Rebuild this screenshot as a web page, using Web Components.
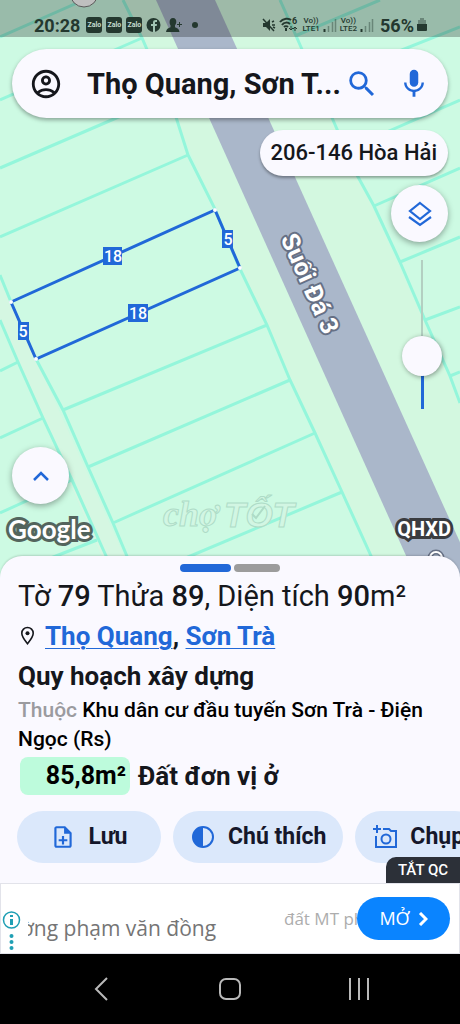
<!DOCTYPE html>
<html lang="vi">
<head>
<meta charset="utf-8">
<meta name="viewport" content="width=device-width, initial-scale=1">
<title>Bản đồ quy hoạch</title>
<style>
  html, body { margin: 0; }
  body { font-family: Roboto, "Noto Sans", sans-serif; color: #15171c; background: #000; }
</style>
</head>
<body>
<app-screen>
  <land-map slot="map"></land-map>
  <status-bar slot="top"></status-bar>
  <search-bar slot="top" query="Thọ Quang, Sơn T..."></search-bar>
  <map-tools slot="top"></map-tools>
  <map-footer slot="top"></map-footer>
  <parcel-sheet slot="sheet"></parcel-sheet>
  <ad-banner slot="ad"></ad-banner>
  <nav-bar slot="nav"></nav-bar>
</app-screen>

<script>
function define(name, html, setup) {
  const template = document.createElement('template');
  template.innerHTML = html;
  customElements.define(name, class extends HTMLElement {
    constructor() {
      super();
      this.attachShadow({ mode: 'open' }).append(template.content.cloneNode(true));
    }
    connectedCallback() { if (setup) setup(this, this.shadowRoot); }
  });
}

define('app-screen', `
<style>
  :host { display: flex; flex-direction: column; min-height: 100vh; }
  main { position: relative; flex: 1; display: flex; flex-direction: column; min-height: 540px; }
</style>
<main><slot name="map"></slot><slot name="top"></slot></main>
<slot name="sheet"></slot><slot name="ad"></slot><slot name="nav"></slot>`);

/* Map canvas lying under the controls; it reaches below the sheet's round corners */
define('land-map', `
<style>
  :host { position: absolute; inset: 0 0 -24px 0; background: #cdfae3; overflow: hidden; }
  svg { display: block; width: 100%; height: 100%; font-family: Roboto, sans-serif; }
  .lines { fill: none; stroke: #94f6db; stroke-width: 3; }
  .tag rect { fill: #2168d8; }
  .tag text { fill: #fff; font-size: 16px; font-weight: 500; text-anchor: middle; }
  .street { fill: #fff; stroke: #667085; stroke-width: 4; paint-order: stroke; stroke-linejoin: round; font-size: 25px; font-weight: 700; text-anchor: middle; }
  .mark { fill: #d2f6e3; stroke: #aedcc7; stroke-width: 1; font-style: italic; font-weight: 700; }
</style>
<svg viewBox="0 0 460 580" preserveAspectRatio="xMidYMid slice">
  <path fill="#d3f8e0" d="M123 0H280L460 403V580H380L123 0Z"/>
  <path fill="#d5f7e2" d="M11 302 36 359 135 580H112L0 322V280Z"/>
  <path class="lines" d="M123 0 142 38 176 117 188 155 215 209 239 267 267 325 290 380 315 433 342 492 382 580
    M0 275 11 302 M36 359 63 410 88 467 113 523 137 580
    M0 320 18 362 43 418 72 480 102 547 117 580
    M188 155 0 237 M172 94 0 168 M142 38 0 100 M84 0 0 37
    M267 325 63 410 M290 380 88 467 M315 433 113 523 M342 492 150 573
    M18 362 0 371 M43 418 0 438 M72 480 0 513 M97 540 20 570
    M280 0 297 38 333 120 357 175 374 206 400 262 425 320 450 376 460 403
    M295 36 380 0 M316 84 460 27 M350 148 460 100 M374 206 460 168 M400 262 460 237 M425 320 460 307 M450 376 460 372"/>
  <path fill="#aab7ca" d="M156 0H215L477 580H417Z"/>
  <circle cx="84" cy="-7" r="14" fill="#fff" stroke="#777"/>
  <path d="M11 302 215 210 240 268 36 359Z" fill="none" stroke="#2168d8" stroke-width="3"/>
  <g fill="#fff"><circle cx="11" cy="302" r="2"/><circle cx="215" cy="210" r="2"/><circle cx="240" cy="268" r="2"/><circle cx="36" cy="359" r="2"/></g>
  <g class="tag"><rect x="103" y="247" width="19" height="18"/><text x="113" y="262">18</text></g>
  <g class="tag"><rect x="128" y="304" width="20" height="18"/><text x="138" y="319">18</text></g>
  <g class="tag"><rect x="222" y="230" width="11" height="18"/><text x="228" y="245">5</text></g>
  <g class="tag"><rect x="18" y="322" width="11" height="18"/><text x="23" y="337">5</text></g>
  <text class="street" transform="translate(302 287) rotate(66)">Suối Đá 3</text>
  <circle cx="436" cy="558" r="6" fill="none" stroke="#667085" stroke-width="5"/>
  <circle cx="436" cy="558" r="6" fill="none" stroke="#fff" stroke-width="2"/>
  <text class="mark" x="163" y="526" font-size="36" font-family="Liberation Serif">chợ</text>
  <text class="mark" x="224" y="527" font-size="35" font-family="Liberation Sans">TỐT</text>
  <path d="M252 514 256 518 265 506" fill="none" stroke="#aedcc7" stroke-width="2"/>
</svg>`);

define('status-bar', `
<style>
  :host { position: relative; display: flex; align-items: flex-end; box-sizing: border-box; height: 37px; padding: 0 33px 2px 34px; background: rgba(0,0,0,.25); color: #24382f; }
  div { display: flex; align-items: center; height: 20px; }
  .l { gap: 4px; flex: 1; } .r { gap: 3px; }
  time { font-size: 18px; font-weight: 700; margin-right: 2px; }
  b { font-size: 18px; font-weight: 700; margin-left: 3px; }
  .z { display: grid; place-items: center; width: 16px; height: 16px; border-radius: 3px; background: #24382f; color: #c4dccf; font-size: 7px; font-weight: 700; }
  .v { display: grid; font-size: 8px; line-height: 8px; font-weight: 500; text-align: center; }
  svg { display: block; flex: none; }
</style>
<div class="l"><time>20:28</time><span class="z">Zalo</span><span class="z">Zalo</span><span class="z">Zalo</span>
  <svg width="15" height="16" viewBox="0 0 15 16"><circle cx="7.500" cy="8" r="7" fill="#24382f"/><path d="M7 15V9H5V7h2V5.500C7 3.800 8 3 9.500 3H11v2H9.800C9.200 5 9 5.300 9 6v1h2l-.3 2H9v6" fill="#a2c4b3"/></svg>
  <svg width="18" height="16" viewBox="0 0 18 16" fill="#24382f"><path d="M8 1c2.300 0 3.500 1.700 3.300 4-.1 1.600-.8 2.600-1.300 3.300v2c2.500 1 4 1.700 4.500 4.700H1c.5-3 2-3.700 4.500-4.700v-2C5 7.600 4.600 6.600 4.600 5 4.500 2.700 5.700 1 8 1zM14 5h1v2h2v1h-2v2h-1V8h-2V7h2z"/></svg>
  <svg width="18" height="16" viewBox="0 0 18 16"><circle cx="8" cy="8" r="3" fill="#24382f"/></svg>
</div>
<div class="r">
  <svg width="14" height="14" viewBox="0 0 14 14"><path d="M1 5h3l4-4v12L4 9H1z" fill="#24382f"/><path d="M1 1 12 13M10 4l2-1M10 7h3M11 9l2 1" stroke="#24382f" stroke-width="1.500"/></svg>
  <svg width="20" height="16" viewBox="0 0 20 16" fill="none" stroke="#24382f" stroke-width="2"><path d="M1 5C4 1 10 1 12 3M3 8c2-3 6-3 8-1M5 10c1-1 3-1 4 0"/><path d="M7 11v3" /><path d="M12 9v4m-2-2 2 2 2-2M16 14v-4m-2 2 2-2 2 2" stroke-width="1"/><text x="13" y="7" font-size="9" font-weight="700" fill="#24382f" stroke="none">6</text></svg>
  <span class="v"><span>Vo))</span><span>LTE1</span></span>
  <svg width="14" height="14" viewBox="0 0 14 14" stroke="#24382f"><path d="M1.500 14v-3" stroke-width="2"/><path d="M5.500 14V8M9.500 14V4M12.500 14V1" stroke-width="1.500" opacity=".4"/></svg>
  <span class="v"><span>Vo))</span><span>LTE2</span></span>
  <svg width="14" height="14" viewBox="0 0 14 14" stroke="#24382f"><path d="M1.500 14v-3" stroke-width="2"/><path d="M5.500 14V8M9.500 14V4M12.500 14V1" stroke-width="1.500" opacity=".4"/></svg>
  <b>56%</b>
  <svg width="10" height="14" viewBox="0 0 10 14" fill="#24382f"><path d="M3 0h4v2h2v5H1V2h2z" opacity=".4"/><path d="M0 6h10v6a1 1 0 0 1-1 1H1a1 1 0 0 1-1-1z"/></svg>
</div>`);

define('search-bar', `
<style>
  :host { position: relative; display: block; margin: 12px 12px 0; }
  form { display: flex; align-items: center; height: 69px; box-sizing: border-box; padding: 0 17px; border-radius: 35px; background: #faf9ff; box-shadow: 0 2px 4px rgba(0,0,0,.35); }
  button { flex: none; display: grid; place-items: center; width: 34px; height: 34px; padding: 0; border: 0; background: none; color: #2168d8; }
  .me { color: #15171c; margin-right: 24px; }
  .mic { margin-left: 18px; color: #2168d8; }
  input { flex: 1; min-width: 0; height: 40px; padding: 0; border: 0; outline: 0; background: none; color: #15171c; font: 700 29px/40px Roboto, sans-serif; }
  svg { display: block; width: 34px; height: 34px; fill: currentColor; }
</style>
<form>
  <button type="button" class="me" aria-label="Tài khoản"><svg viewBox="0 0 24 24"><path d="M12 2C6.480 2 2 6.480 2 12s4.480 10 10 10 10-4.480 10-10S17.520 2 12 2zM7.350 18.500C8.660 17.560 10.260 17 12 17s3.340.56 4.650 1.500C15.340 19.440 13.740 20 12 20s-3.340-.56-4.650-1.500zm10.790-1.380C16.450 15.800 14.320 15 12 15s-4.450.8-6.140 2.120C4.700 15.730 4 13.950 4 12c0-4.420 3.580-8 8-8s8 3.580 8 8c0 1.950-.7 3.730-1.860 5.120zM12 6c-1.930 0-3.500 1.570-3.500 3.500S10.070 13 12 13s3.500-1.570 3.500-3.500S13.930 6 12 6zm0 5c-.83 0-1.500-.67-1.500-1.500S11.170 8 12 8s1.500.67 1.500 1.500S12.830 11 12 11z"/></svg></button>
  <input type="text" aria-label="Tìm kiếm">
  <button type="button" aria-label="Tìm"><svg viewBox="0 0 24 24"><path d="M15.500 14h-.79l-.28-.27A6.471 6.471 0 0 0 16 9.500 6.500 6.500 0 1 0 9.500 16c1.610 0 3.090-.59 4.230-1.570l.27.28v.79l5 4.990L20.490 19l-4.990-5zm-6 0C7.010 14 5 11.990 5 9.500S7.010 5 9.500 5 14 7.010 14 9.500 11.990 14 9.500 14z"/></svg></button>
  <button type="button" class="mic" aria-label="Giọng nói"><svg viewBox="0 0 24 24"><path d="M12 14c1.660 0 3-1.340 3-3V5c0-1.660-1.340-3-3-3S9 3.340 9 5v6c0 1.660 1.340 3 3 3z"/><path d="M17.300 11c0 3-2.540 5.100-5.300 5.100S6.700 14 6.700 11H5c0 3.410 2.720 6.230 6 6.720V21h2v-3.280c3.280-.48 6-3.300 6-6.720h-1.700z"/></svg></button>
</form>`, (host, root) => { root.querySelector('input').value = host.getAttribute('query'); });

define('round-button', `
<style>
  :host { display: block; width: 57px; height: 57px; }
  button { display: grid; place-items: center; width: 100%; height: 100%; padding: 0; border: 0; border-radius: 50%; background: #faf9ff; box-shadow: 0 2px 6px rgba(0,0,0,.35); }
</style>
<button><slot></slot></button>`, (host, root) => root.querySelector('button').setAttribute('aria-label', host.getAttribute('label')));

define('map-tools', `
<style>
  :host { position: relative; display: flex; flex-direction: column; align-items: flex-end; margin: 12px 12px 0; }
  .chip { height: 46px; padding: 0 11px; border: 0; border-radius: 23px; background: #faf9ff; box-shadow: 0 2px 3px rgba(0,0,0,.35); color: #15171c; font: 500 22px/46px Roboto, sans-serif; }
  round-button { margin-top: 9px; }
  input { -webkit-appearance: none; appearance: none; writing-mode: vertical-lr; direction: rtl; width: 40px; height: 149px; margin: 18px 6px 0 0; background: none; }
  input::-webkit-slider-runnable-track { width: 40px; height: 149px; background: linear-gradient(#b3cfc1, #b3cfc1) center top / 2px 96px no-repeat, linear-gradient(#2168d8, #2168d8) center bottom / 3px 53px no-repeat; }
  input::-webkit-slider-thumb { -webkit-appearance: none; width: 40px; height: 40px; border-radius: 50%; background: #faf9ff; box-shadow: 1px 1px 5px rgba(0,0,0,.4); }
</style>
<button class="chip">206-146 Hòa Hải</button>
<round-button label="Lớp bản đồ"><svg width="26" height="26" viewBox="0 0 26 26" fill="none" stroke="#2168d8" stroke-width="2.200"><path d="M13 2 23 10 13 18 3 10zM2 16l11 8 11-8"/></svg></round-button>
<input type="range" min="0" max="100" value="30" aria-label="Độ mờ">`);

define('map-footer', `
<style>
  :host { position: relative; display: block; margin: auto 9px 10px 8px; }
  round-button { margin: 0 0 8px 4px; }
  div { display: flex; justify-content: space-between; align-items: center; height: 34px; color: #fff; line-height: 34px; }
  span { paint-order: stroke fill; }
  .g { font-family: Lato, sans-serif; font-size: 26px; font-weight: 700; -webkit-text-stroke: 6px #53655d; }
  .q { font-size: 20px; font-weight: 700; -webkit-text-stroke: 6px #3a3c40; }
</style>
<round-button label="Mở rộng"><svg width="18" height="12" viewBox="0 0 18 12" fill="none" stroke="#2168d8" stroke-width="2.500"><path d="M2 10 9 3l7 7"/></svg></round-button>
<div><span class="g">Google</span><span class="q">QHXD</span></div>`);

define('action-button', `
<style>
  :host { display: block; flex: none; }
  button { display: flex; align-items: center; justify-content: center; gap: 12px; height: 52px; width: 100%; padding: 0 17px; border: 0; border-radius: 26px; background: #dbe8fb; color: #15172a; font: 700 23px/52px Roboto, sans-serif; }
</style>
<button><slot name="icon"></slot><slot></slot></button>`);

define('parcel-sheet', `
<style>
  :host { position: relative; display: flex; flex-direction: column; box-sizing: border-box; padding: 8px 0 20px 18px; border-radius: 22px 22px 0 0; background: #faf9ff; box-shadow: 0 -1px 2px rgba(0,0,0,.15); }
  .handle { display: flex; justify-content: center; gap: 3px; margin: 0 0 8px -18px; }
  .handle i { width: 46px; height: 8px; border-radius: 4px; background: #9c9c9c; }
  .handle i:first-child { width: 51px; background: #2168d8; }
  h1, h2, p { margin: 0; }
  h1 { font-size: 29px; line-height: 32px; font-weight: 400; }
  h1 b { font-weight: 500; }
  .place, h2, .type { font-size: 26px; font-weight: 700; }
  .place { display: flex; align-items: center; margin-top: 8px; line-height: 32px; }
  .place svg { margin: 0 10px 0 2px; }
  a { color: #2168d8; text-decoration-thickness: 1px; text-underline-offset: 3px; }
  h2 { margin-top: 8px; line-height: 32px; }
  .zone { margin: 4px 30px 0 0; font-size: 21px; line-height: 29px; font-weight: 500; color: #000; }
  .zone span { color: #9b9b9f; }
  .type { display: flex; align-items: center; gap: 8px; margin: 3px 0 0 2px; line-height: 38px; }
  .type span { width: 106px; padding-right: 4px; border-radius: 8px; background: #bdfbdc; color: #000; font-size: 25px; text-align: right; }
  .actions { display: flex; gap: 12px; margin: 16px 0 0 -1px; overflow: hidden; }
  .save { width: 144px; }
  .off { position: absolute; right: 0; bottom: 0; width: 74px; height: 26px; padding: 0; border: 0; border-radius: 10px 0 0 0; background: #2c3038; color: #fff; font: 500 15px/26px Roboto, sans-serif; }
</style>
<div class="handle"><i></i><i></i></div>
<h1>Tờ <b>79</b> Thửa <b>89</b>, Diện tích <b>90</b>m²</h1>
<p class="place"><svg width="15" height="20" viewBox="0 0 15 20" fill="none" stroke="#15171c" stroke-width="1.600"><path d="M7.500 1.500a5.700 5.700 0 0 1 5.700 5.700c0 3.800-4.200 8.500-5.700 10.500C6 15.700 1.800 11 1.800 7.200a5.700 5.700 0 0 1 5.700-5.700z"/><circle cx="7.500" cy="7.200" r="2" fill="#15171c" stroke="none"/></svg><span><a href="#tho-quang">Thọ Quang</a>, <a href="#son-tra">Sơn Trà</a></span></p>
<h2>Quy hoạch xây dựng</h2>
<p class="zone"><span>Thuộc</span> Khu dân cư đầu tuyến Sơn Trà - Điện Ngọc (Rs)</p>
<p class="type"><span>85,8m²</span>Đất đơn vị ở</p>
<div class="actions">
  <action-button class="save"><svg slot="icon" width="26" height="26" viewBox="0 0 24 24" fill="#2168d8"><path d="M13 11h-2v3H8v2h3v3h2v-3h3v-2h-3zm1-9H6c-1.100 0-2 .9-2 2v16c0 1.100.89 2 1.990 2H18c1.100 0 2-.9 2-2V8l-6-6zm4 18H6V4h7v5h5v11z"/></svg>Lưu</action-button>
  <action-button><svg slot="icon" width="26" height="26" viewBox="0 0 26 26"><circle cx="13" cy="13" r="10" fill="none" stroke="#2168d8" stroke-width="2"/><path d="M13 3a10 10 0 0 0 0 20z" fill="#2168d8"/></svg>Chú thích</action-button>
  <action-button><svg slot="icon" width="26" height="26" viewBox="0 0 26 26" fill="none" stroke="#2168d8" stroke-width="2"><path d="M5 1v8M1 5h8M4 12v11h20V7h-5l-2-2h-6"/><circle cx="14" cy="15" r="4.500"/></svg>Chụp</action-button>
</div>
<button class="off">TẮT QC</button>`);

define('ad-banner', `
<style>
  :host { position: relative; display: flex; align-items: center; box-sizing: border-box; height: 71px; padding-right: 9px; border: 1px solid #e2e3ea; background: #fff; font-family: "Open Sans", "Noto Sans", sans-serif; color: #757575; overflow: hidden; }
  .info { flex: none; display: grid; width: 27px; height: 42px; padding: 0 0 0 1px; margin-top: 26px; border: 0; background: none; }
  .head { flex: 1; overflow: hidden; white-space: nowrap; font-size: 21px; line-height: 30px; margin-top: 18px; text-indent: -7px; }
  .sub { width: 73px; overflow: hidden; white-space: nowrap; font-size: 17px; line-height: 24px; color: #adadad; }
  .open { flex: none; display: flex; align-items: center; justify-content: center; gap: 8px; width: 93px; height: 43px; padding: 0; border: 0; border-radius: 22px; background: #0a84ff; color: #fff; font: 500 18px/43px "Open Sans", sans-serif; }
</style>
<button class="info" aria-label="Thông tin quảng cáo"><svg width="19" height="40" viewBox="0 0 19 40" fill="#1f9fb4"><circle cx="9.500" cy="9" r="8" fill="none" stroke="#1f9fb4" stroke-width="1.500"/><path d="M8 8h3v6H8zM8 4h3v2H8z"/><circle cx="9.500" cy="25" r="2"/><circle cx="9.500" cy="31" r="2"/><circle cx="9.500" cy="37" r="2"/></svg></button>
<span class="head">ờng phạm văn đồng</span>
<span class="sub">đất MT ph</span>
<button class="open">MỞ<svg width="10" height="14" viewBox="0 0 10 14" fill="none" stroke="#fff" stroke-width="3"><path d="m2 1 6 6-6 6"/></svg></button>`);

define('nav-bar', `
<style>
  :host { display: block; background: #000; }
  nav { display: grid; grid-template-columns: repeat(3, 1fr); height: 70px; padding: 0 37px; }
  button { display: grid; place-items: center; padding: 0; border: 0; background: none; }
  svg { fill: none; stroke: #b9b9b9; stroke-width: 2; }
</style>
<nav>
  <button aria-label="Quay lại"><svg width="24" height="24" viewBox="0 0 24 24"><path d="M18 1 7 12l11 11"/></svg></button>
  <button aria-label="Trang chủ"><svg width="24" height="24" viewBox="0 0 24 24"><rect x="2" y="2" width="20" height="20" rx="6"/></svg></button>
  <button aria-label="Gần đây"><svg width="24" height="24" viewBox="0 0 24 24"><path d="M3 1v22M12 1v22M21 1v22"/></svg></button>
</nav>`);
</script>
</body>
</html>
